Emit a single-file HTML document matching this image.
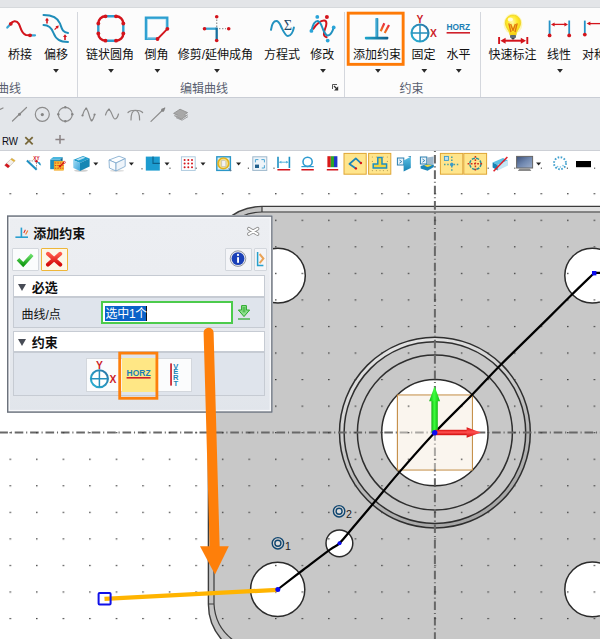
<!DOCTYPE html>
<html lang="zh-CN"><head><meta charset="utf-8"><title>添加约束</title>
<style>
html,body{margin:0;padding:0}
body{width:600px;height:639px;overflow:hidden;position:relative;background:#fff;font-family:"Liberation Sans","Noto Sans CJK SC",sans-serif;font-size:12px;color:#1a1a1a}
.abs{position:absolute}
#topstrip{left:0;top:0;width:600px;height:8px;background:#e3e5e8;border-bottom:1px solid #d6d9dc;box-sizing:border-box}
#ribbon{left:0;top:0;width:600px;height:97px;background:#fcfcfc}
#band{left:0;top:97px;width:600px;height:53px;background:#e3e6ea;border-top:1px solid #c9cdd5;box-sizing:border-box}
.lbl{position:absolute;top:46.8px;font-size:12px;line-height:16px;white-space:nowrap;transform:translateX(-50%);color:#111}
.grp{position:absolute;top:80.7px;font-size:12px;line-height:16px;white-space:nowrap;transform:translateX(-50%);color:#595f70}
.vsep{position:absolute;top:12px;width:1px;height:85px;background:#d4d7dd}
.sech{position:absolute;left:5px;width:252px;height:21.5px;box-sizing:border-box;border:1px solid #c6cbd3;background:#fff}
.secr{position:absolute;left:5px;width:252px;box-sizing:border-box;border:1px solid #c6cbd3;background:#dfe4ec}
.tri{position:absolute;left:3.6px;top:7.6px;width:0;height:0;border-left:4.7px solid transparent;border-right:4.7px solid transparent;border-top:7.8px solid #484c56}
.st{position:absolute;left:17.8px;top:2.8px;font-size:13px;line-height:18px;font-weight:bold;color:#111;white-space:nowrap}
</style></head><body>
<!-- CANVAS -->
<svg class="abs" id="canvas" style="left:0;top:0" width="600" height="639" viewBox="0 0 600 639">
<defs>
<pattern id="grid" x="434.3" y="432.1" width="26.55" height="26.55" patternUnits="userSpaceOnUse"><rect x="0" y="0" width="1.5" height="1.2" fill="#383838"/></pattern>
<linearGradient id="cham" x1="0.3" y1="0" x2="0.7" y2="1"><stop offset="0" stop-color="#e4e4e4"/><stop offset="0.3" stop-color="#d4d4d4"/><stop offset="0.55" stop-color="#bcbcbc"/><stop offset="1" stop-color="#a4a4a4"/></linearGradient>
</defs>
<!-- plate -->
<path d="M262 206.4 H601 V640 H222 A53.6 53.6 0 0 1 208.4 604 V260 A53.6 53.6 0 0 1 262 206.4Z" fill="#c3c3c3" stroke="#3c3c3c" stroke-width="1.4"/>
<path d="M262 207.1 H600 V211.6 H262Z" fill="#e0e0e0"/>
<path d="M262 212 H601 V640 H233 A48 48 0 0 1 214 604 V260 A48 48 0 0 1 262 212Z" fill="#c8c8c8" stroke="#3a3a3a" stroke-width="1.2"/>
<path d="M262 206.4V212 M208.4 604H214" stroke="#3c3c3c" stroke-width="1.2" fill="none"/>
<!-- holes -->
<g fill="#fff" stroke="#2b2b2b" stroke-width="1.5">
<circle cx="277.9" cy="275.6" r="27.4"/>
<circle cx="592.2" cy="275.6" r="27.4"/>
<circle cx="277.7" cy="589.4" r="27.1"/>
<circle cx="592.2" cy="589.4" r="27.4"/>
<circle cx="339.4" cy="543.3" r="13.4"/>
</g>
<!-- centre boss -->
<circle cx="434.9" cy="432.6" r="95.4" fill="url(#cham)" stroke="#2e2e2e" stroke-width="1.5"/>
<circle cx="434.9" cy="432.6" r="90.8" fill="#c8c8c8" stroke="#2e2e2e" stroke-width="1.5"/>
<circle cx="434.9" cy="432.6" r="77.5" fill="none" stroke="#2e2e2e" stroke-width="1.5"/>
<circle cx="434.9" cy="432.6" r="53.2" fill="#fff" stroke="#2b2b2b" stroke-width="1.5"/>
<rect x="397.4" y="395" width="75" height="75" fill="#faf6f1" stroke="#c48c44" stroke-width="1.1"/>
<!-- centre lines -->
<path d="M0 432.5H600" stroke="#686868" stroke-width="2" stroke-dasharray="8.6 2.85 1.1 2.85" stroke-dashoffset="0.7" fill="none"/>
<path d="M434.9 151V639" stroke="#686868" stroke-width="2" stroke-dasharray="8.6 2.85 1.1 2.85" stroke-dashoffset="11.5" fill="none"/>
<rect x="398" y="395.6" width="73.8" height="73.8" fill="#faf4ea" opacity="0.45"/>
<!-- grid -->
<rect x="0" y="180" width="600" height="459" fill="url(#grid)"/>
<!-- spline -->
<path d="M600 272.8 L594.4 272.8 C590.6 276.5 579.4 287.2 571.7 294.8 C564.0 302.4 559.8 306.7 548.0 318.4 C536.2 330.1 513.5 352.0 500.8 364.8 C488.1 377.6 482.9 383.7 471.9 395.0 C460.9 406.3 446.9 419.7 434.8 432.5 C422.8 445.3 409.6 460.4 399.6 471.9 C389.6 483.4 382.8 492.0 374.9 501.5 C366.9 511.0 357.8 521.8 351.9 528.8 C346.0 535.8 343.0 539.9 339.4 543.4 C335.8 546.9 336.1 545.2 330.0 549.6 C323.9 554.0 311.7 563.4 303.0 570.0 C294.3 576.6 281.8 586.2 277.6 589.5" fill="none" stroke="#000" stroke-width="2.2"/>
<!-- yellow line -->
<path d="M104.5 598.8 L277.8 589.8" stroke="#ffb400" stroke-width="4.2" fill="none"/>
<rect x="98.6" y="593" width="12" height="11.5" rx="1" fill="none" stroke="#1010e8" stroke-width="2"/>
<!-- triad -->
<defs>
<linearGradient id="gg" x1="0" y1="0" x2="1" y2="0"><stop offset="0" stop-color="#12b012"/><stop offset="0.45" stop-color="#3cff3c"/><stop offset="1" stop-color="#14bc14"/></linearGradient>
<linearGradient id="rg" x1="0" y1="0" x2="0" y2="1"><stop offset="0" stop-color="#d80c0c"/><stop offset="0.45" stop-color="#ff5050"/><stop offset="1" stop-color="#cc0808"/></linearGradient>
</defs>
<rect x="431.4" y="400" width="6.4" height="32.6" fill="url(#gg)"/>
<path d="M429.1 401.2 L434.6 386.2 L440.1 401.2Z" fill="url(#gg)"/>
<rect x="435" y="429.8" width="32" height="5.4" fill="url(#rg)"/>
<path d="M466.6 427.3 L480.8 432.6 L466.6 437.8Z" fill="url(#rg)"/>
<circle cx="434.7" cy="432.7" r="2.7" fill="#0a0af0"/>
<circle cx="277.8" cy="589.5" r="2.5" fill="#0a0af0"/>
<circle cx="339.5" cy="543.3" r="2" fill="#0a0af0"/>
<rect x="592" y="271" width="4.4" height="4.4" fill="#0a0af0"/>
<!-- concentric marks -->
<g fill="#d6d2d0" stroke="#0f4670" stroke-width="1.4">
<circle cx="277.9" cy="543.3" r="5.7"/><circle cx="277.9" cy="543.3" r="3" fill="#dcdcdc"/>
<circle cx="339.1" cy="511.3" r="5.7"/><circle cx="339.1" cy="511.3" r="3" fill="#dcdcdc"/>
</g>
<text x="285" y="549.8" font-size="10.6" fill="#222" font-family="Liberation Sans, sans-serif">1</text>
<text x="345.9" y="517.8" font-size="10.6" fill="#222" font-family="Liberation Sans, sans-serif">2</text>
</svg>


<div class="abs" id="ribbon">
<div class="vsep" style="left:77px"></div>
<div class="vsep" style="left:343.8px"></div>
<div class="vsep" style="left:479.9px"></div>
<div class="lbl" style="left:20px">桥接</div>
<div class="lbl" style="left:56px">偏移</div>
<div class="lbl" style="left:110px">链状圆角</div>
<div class="lbl" style="left:156.5px">倒角</div>
<div class="lbl" style="left:215.3px">修剪/延伸成角</div>
<div class="lbl" style="left:282px">方程式</div>
<div class="lbl" style="left:322.3px">修改</div>
<div class="lbl" style="left:377px">添加约束</div>
<div class="lbl" style="left:423.5px">固定</div>
<div class="lbl" style="left:458.5px">水平</div>
<div class="lbl" style="left:512.5px">快速标注</div>
<div class="lbl" style="left:559px">线性</div>
<div class="lbl" style="left:594px">对称</div>
<div class="grp" style="left:9px">曲线</div>
<div class="grp" style="left:204px">编辑曲线</div>
<div class="grp" style="left:411.6px">约束</div>
<svg class="abs" id="ribicons" style="left:0;top:0" width="600" height="97" viewBox="0 0 600 97">
<defs>
<linearGradient id="bl" x1="0" y1="0" x2="0" y2="1"><stop offset="0" stop-color="#4db4dc"/><stop offset="1" stop-color="#1a7fae"/></linearGradient>
<linearGradient id="blh" x1="0" y1="0" x2="1" y2="0"><stop offset="0" stop-color="#1a86b6"/><stop offset="1" stop-color="#56bce0"/></linearGradient>
<radialGradient id="bulb" cx="0.45" cy="0.35" r="0.65"><stop offset="0" stop-color="#fff9a8"/><stop offset="0.5" stop-color="#ffe92a"/><stop offset="1" stop-color="#f4cc10"/></radialGradient>
</defs>
<!-- bridge -->
<g fill="none" stroke-linecap="round">
<path d="M7.3 27.6 L10.3 24.2" stroke="#3aa6d4" stroke-width="2.2"/>
<path d="M31 35.3 H35" stroke="#3aa6d4" stroke-width="2.2"/>
<path d="M10.3 24.2 C12.5 20.8 16.5 20 18.8 23.8 C21 27.5 21 33.5 26 35 L30.5 35.3" stroke="#d3141c" stroke-width="2.1"/>
</g>
<circle cx="10.8" cy="23.8" r="1.9" fill="#d3141c"/><circle cx="30" cy="35.3" r="1.9" fill="#d3141c"/>
<!-- offset -->
<g fill="none" stroke="#1f8db9" stroke-width="2" stroke-linecap="round">
<path d="M43.5 15 C52 15 57.5 17 60 23.5 C62 29 62.5 32.5 68 33"/>
<path d="M43.5 25 C49 25 51.5 27.5 53.5 33 C56 39.5 60 41.8 68 42"/>
</g>
<g fill="#d3141c">
<path d="M46.2 23.6V20.6H45L47 17.8L49 20.6H47.8V23.6Z"/>
<path d="M64.2 40V37H63L65 34.2L67 37H65.8V40Z"/>
<path d="M54.2 29.2L56.3 27.1L55.4 26.2L58.8 25.4L58 28.8L57.1 27.9L55 30Z"/>
</g>
<!-- chain fillet -->
<g fill="none" stroke-width="2.4">
<path d="M105.5 16.3H116 M105.5 40.7H116 M98.3 23.5V33.5 M123.3 23.5V33.5" stroke="#2d9fd0"/>
<path d="M98.3 23.5 A7.2 7.2 0 0 1 105.5 16.3 M116 16.3 A7.3 7.2 0 0 1 123.3 23.5 M123.3 33.5 A7.3 7.2 0 0 1 116 40.7 M105.5 40.7 A7.2 7.2 0 0 1 98.3 33.5" stroke="#d3141c"/>
</g>
<g fill="#d3141c"><circle cx="105.5" cy="16.3" r="1.9"/><circle cx="116" cy="16.3" r="1.9"/><circle cx="123.3" cy="23.5" r="1.9"/><circle cx="123.3" cy="33.5" r="1.9"/><circle cx="116" cy="40.7" r="1.9"/><circle cx="105.5" cy="40.7" r="1.9"/><circle cx="98.3" cy="33.5" r="1.9"/><circle cx="98.3" cy="23.5" r="1.9"/></g>
<!-- chamfer -->
<path d="M157.5 38.8H146V17.8H167.2V28.8" fill="none" stroke="#2d9fd0" stroke-width="2.5"/>
<path d="M157.5 38.8H147.4V19.1H166V28.8" fill="none" stroke="#8fd2ec" stroke-width="0.8" opacity="0.8"/>
<path d="M167.4 28.8L157.5 39" stroke="#d3141c" stroke-width="1.8"/>
<circle cx="167.4" cy="28.8" r="1.9" fill="#d3141c"/><circle cx="157.5" cy="39" r="1.9" fill="#d3141c"/>
<!-- trim -->
<path d="M216.7 19.5V27 M219 28.7H226" stroke="#999" stroke-width="1.3" stroke-dasharray="1.4 1.6" fill="none"/>
<path d="M204.5 28.7H216.7" stroke="#3aa6d4" stroke-width="2.3" fill="none"/>
<path d="M216.7 27.6V40.5" stroke="#176f9e" stroke-width="2.3" fill="none"/>
<g fill="#d3141c"><circle cx="216.7" cy="16.8" r="1.8"/><circle cx="204.5" cy="28.7" r="1.8"/><circle cx="228.7" cy="28.7" r="1.8"/><circle cx="216.7" cy="40.5" r="1.8"/></g>
<!-- equation -->
<path d="M271 29.8C271.8 24.4 274 21.1 276.3 21.1C279.4 21.1 280.4 25.4 281.9 28.3C283.6 31.8 285.6 36.1 287.9 36.1C290.6 36.1 293 32 293.9 27.5" fill="none" stroke="#2292c0" stroke-width="2" stroke-linecap="round"/>
<text x="283.8" y="29.9" font-family="Liberation Serif, serif" font-size="13.6" fill="#1c4868" textLength="8.3" lengthAdjust="spacingAndGlyphs">Σ</text>
<!-- modify -->
<path d="M313.4 28.6C316 24.4 320.6 20.4 324.2 20.6C327.4 20.8 326.6 25 325 29C323.6 32.8 323 36.2 326.6 37.2" fill="none" stroke="#d3141c" stroke-width="2" stroke-linecap="round"/>
<path d="M311.4 30.9C312.6 25.6 315 21 317.6 21C320.6 21 321.6 26.4 323.3 30C324.6 33 326 35.6 327.8 35.4C330.4 35 332.6 31.4 333.7 27.4" fill="none" stroke="#2292c0" stroke-width="2" stroke-linecap="round"/>
<g fill="#2aa4d8"><circle cx="311.4" cy="30.9" r="1.9"/><circle cx="317.3" cy="16.9" r="1.9"/><circle cx="333.7" cy="27.4" r="1.9"/><circle cx="327.7" cy="40.6" r="1.9"/></g>
<circle cx="326.9" cy="16.9" r="2" fill="#d3141c"/>
<!-- add constraint -->
<defs><linearGradient id="sl" x1="0" y1="0" x2="0" y2="1"><stop offset="0" stop-color="#e8263c"/><stop offset="1" stop-color="#f27a1c"/></linearGradient>
<linearGradient id="stem" x1="0" y1="0" x2="1" y2="0"><stop offset="0" stop-color="#62bee4"/><stop offset="1" stop-color="#1688b4"/></linearGradient>
<linearGradient id="base" x1="0" y1="0" x2="1" y2="0"><stop offset="0" stop-color="#1ea6cc"/><stop offset="1" stop-color="#0f5c88"/></linearGradient></defs>
<rect x="375.2" y="18" width="3.1" height="19.4" rx="0.8" fill="url(#stem)"/>
<rect x="364.9" y="36.7" width="23.4" height="2.7" rx="0.8" fill="url(#base)"/>
<path d="M384.3 23.3L380.7 31.3" stroke="url(#sl)" stroke-width="2.2"/>
<path d="M389 25L384.7 33" stroke="url(#sl)" stroke-width="2.2"/>
<!-- fix -->
<defs><linearGradient id="fixg" x1="0" y1="1" x2="1" y2="0"><stop offset="0" stop-color="#28b2d4"/><stop offset="1" stop-color="#2a74a6"/></linearGradient></defs>
<circle cx="420" cy="33" r="8.5" fill="#fff" stroke="url(#fixg)" stroke-width="2.1"/>
<path d="M420 24.6V41.4 M411.6 33H428.4" stroke="#2590bc" stroke-width="1.5" fill="none"/>
<text x="416.5" y="22.7" font-family="Liberation Sans, sans-serif" font-weight="bold" font-size="10.3" fill="#cc1c2a">Y</text>
<text x="430" y="36.9" font-family="Liberation Sans, sans-serif" font-weight="bold" font-size="10.3" fill="#cc1c2a">X</text>
<!-- horz -->
<text x="446.4" y="30.4" font-family="Liberation Sans, sans-serif" font-weight="bold" font-size="8.4" fill="#1b7fb5" textLength="23.6" lengthAdjust="spacingAndGlyphs">HORZ</text>
<rect x="446.6" y="32" width="23.4" height="1.6" fill="#d0202a"/>
<!-- quick dim -->
<ellipse cx="513" cy="24" rx="9.4" ry="10.4" fill="#fff27a" opacity="0.55"/>
<path d="M513 15.2C508.4 15.2 505.4 18.6 505.4 22.8C505.4 27 508.2 29.4 509.6 32.6L510 35.4H516L516.4 32.6C517.8 29.4 520.6 27 520.6 22.8C520.6 18.6 517.6 15.2 513 15.2Z" fill="url(#bulb)" stroke="#ecd21c" stroke-width="0.8"/>
<ellipse cx="510.4" cy="19.6" rx="2.6" ry="2" fill="#fffef0" opacity="0.85"/>
<path d="M508.8 23.4L511 32 M517.2 23.4L515 32 M510.6 24L513 30.4L515.4 24" stroke="#e07410" stroke-width="1.4" fill="none" stroke-linejoin="round"/>
<rect x="510" y="35" width="6" height="3" rx="1" fill="#5e6a72"/>
<path d="M511.2 38H514.8L514 39.4H512Z" fill="#3a4248"/>
<path d="M499.1 37V44 M527.3 37V44" stroke="#d3141c" stroke-width="1.9" fill="none"/>
<path d="M503 40.7H523.4" stroke="#d3141c" stroke-width="2" fill="none"/>
<path d="M500.4 40.7L505.6 37.7V43.7Z M526 40.7L520.8 37.7V43.7Z" fill="#d3141c"/>
<!-- linear -->
<path d="M549.6 20.6V34.6 M569.2 20.6V34.6" stroke="#2592c6" stroke-width="1.8" fill="none"/>
<circle cx="549.6" cy="35.4" r="1.9" fill="#d3141c"/><circle cx="569.2" cy="35.4" r="1.9" fill="#d3141c"/>
<path d="M553 24.4H566" stroke="#d3141c" stroke-width="1.3" fill="none"/>
<path d="M551 24.4L554.6 22.4V26.4Z M568 24.4L564.4 22.4V26.4Z" fill="#d3141c"/>
<!-- symmetric -->
<path d="M584.8 20.6V33.6" stroke="#2592c6" stroke-width="1.8" fill="none"/>
<circle cx="584.8" cy="34.6" r="1.9" fill="#d3141c"/>
<path d="M589 23.6H600" stroke="#d3141c" stroke-width="1.3" fill="none"/>
<path d="M586.6 23.6L590.4 21.6V25.6Z" fill="#d3141c"/>
<rect x="348.2" y="13.15" width="54.95" height="51.2" fill="none" stroke="#fe7a06" stroke-width="2.9"/>
<path d="M53.1 69.1H58.9L56.0 72.7Z M108.1 69.1H113.9L111.0 72.7Z M154.5 69.1H160.3L157.4 72.7Z M214.1 69.1H219.9L217.0 72.7Z M320.1 69.1H325.9L323.0 72.7Z M375.1 69.1H380.9L378.0 72.7Z M421.4 69.1H427.2L424.3 72.7Z M455.9 69.1H461.7L458.8 72.7Z M557.1 69.1H562.9L560.0 72.7Z" fill="#2a2a2a"/>
<!-- launcher -->
<path d="M332.5 89V84.5H337" stroke="#555" stroke-width="1" fill="none"/>
<path d="M334 86L337 89" stroke="#333" stroke-width="1.2" fill="none"/>
<path d="M338.2 86.2V90.4H334Z" fill="#333"/>
</svg>
</div>
<div class="abs" id="topstrip"></div>
<div class="abs" id="band"></div>
<svg class="abs" id="bandicons" style="left:0;top:97px" width="600" height="53" viewBox="0 97 600 53">
<g fill="none" stroke="#8c8c8c" stroke-width="1.2" stroke-linecap="round">
<path d="M0 109.5L3 108"/>
<path d="M12.5 121L26.5 107.5"/>
<circle cx="42.3" cy="114.3" r="7"/>
<circle cx="65.3" cy="114.3" r="7"/>
<path d="M82.5 115.5 C83.5 112 84.8 108.8 86.2 108.8 C88.5 108.8 89.5 120.3 91.6 120.3 C93 120.3 94 117 94.6 114.5"/>
<path d="M105.5 115 C106.5 111.5 107.5 109.8 109 109.8 C111.5 109.8 112.5 119 115 119 C116.8 119 117.8 116.5 118.5 114"/>
<path d="M131 120 C131 113 133 110.5 135.3 110.5 C137.6 110.5 139.6 113 139.6 120"/>
<path d="M128 112.5 C131 109.5 139.6 109.5 142.6 112.5"/>
<path d="M151 121.4L164.6 108.2"/>
</g>
<g fill="#858585">
<circle cx="19.5" cy="114.3" r="1.5"/>
<circle cx="42.3" cy="114.6" r="1.6"/>
<circle cx="65.3" cy="107.3" r="1.2"/><circle cx="65.3" cy="121.3" r="1.2"/><circle cx="58.3" cy="114.3" r="1.2"/><circle cx="72.3" cy="114.3" r="1.2"/>
<circle cx="82.5" cy="115.5" r="1.1"/><circle cx="86.2" cy="108.6" r="1.1"/><circle cx="91.6" cy="120.5" r="1.1"/><circle cx="94.6" cy="114.5" r="1.1"/>
<circle cx="109" cy="109.6" r="1.1"/>
<path d="M165.4 107.4L161 109L163.8 111.8Z"/>
<circle cx="162.6" cy="110.2" r="1.5"/>
</g>
<g fill="#a8a8a8" stroke="#8a8a8a" stroke-width="0.8">
<path d="M173.6 113.4L180 109.2L187.6 112.6L181.4 117Z"/>
<path d="M174.2 115.6L181.4 119.2L187.8 114.8"/>
<path d="M176 117.6L182 120.2L188 116.6" fill="none"/>
</g>
<text x="2" y="144.8" font-family="Liberation Sans, sans-serif" font-size="11.2" fill="#0a0a14" textLength="16" lengthAdjust="spacingAndGlyphs">RW</text>
<!-- tab close / plus -->
<path d="M25.3 137.2L32.7 144.4 M32.7 137.2L25.3 144.4" stroke="#78683a" stroke-width="1.8" fill="none"/>
<path d="M60 135V143.8 M55.4 139.4H64.6" stroke="#8a8284" stroke-width="1.5" fill="none"/>
</svg>
<svg class="abs" id="tbicons" style="left:0;top:150px" width="600" height="30" viewBox="0 150 600 30">
<defs>
<linearGradient id="tbb" x1="0" y1="0" x2="0" y2="1"><stop offset="0" stop-color="#5cc0e4"/><stop offset="1" stop-color="#1583b4"/></linearGradient>
<linearGradient id="bxl" x1="0" y1="0" x2="1" y2="1"><stop offset="0" stop-color="#a4dcf4"/><stop offset="1" stop-color="#3aa6dc"/></linearGradient>
<linearGradient id="mon" x1="0" y1="0" x2="1" y2="1"><stop offset="0" stop-color="#3c4f78"/><stop offset="0.5" stop-color="#7088b0"/><stop offset="1" stop-color="#9fb0cc"/></linearGradient>
</defs>
<rect x="0" y="150" width="600" height="1" fill="#cdd0d6"/>
<!-- 1 eraser -->
<path d="M4.6 165.2L11.8 158.2L15.2 160.6L8 168Z" fill="#f4f0ea" stroke="#b9b0a6" stroke-width="0.6"/>
<path d="M4.6 165.2L6.6 163.2L10 166L8 168Z" fill="#d3141c"/>
<path d="M10.6 159.4L11.8 158.2L15.2 160.6L14 161.9Z" fill="#e2b33a"/>
<!-- 2 xy triangle -->
<path d="M26.9 160.5L36.7 169.8" stroke="#1d8fc2" stroke-width="2.1" fill="none"/>
<path d="M29 160.9H35.6 M36.5 162.4V168.4" stroke="#9a9a9a" stroke-width="1" stroke-dasharray="1.6 0.9" fill="none"/>
<text x="33.2" y="159.6" font-family="Liberation Sans, sans-serif" font-weight="bold" font-size="4.8" fill="#d3141c" textLength="6.4" lengthAdjust="spacingAndGlyphs">XY</text>
<circle cx="36.5" cy="161.2" r="1.3" fill="#d3141c"/>
<path d="M37.6 162.2L40.4 165.2L39.8 162.8Z" fill="#1d8fc2" stroke="#1d8fc2" stroke-width="0.8"/>
<!-- 3 cube w/ grid -->
<path d="M50.2 159.6L53.2 157H62.6L60.4 159.6Z" fill="#4ab6de"/>
<path d="M50.2 159.6H60.4V169.2H50.2Z" fill="#1c90c0"/>
<path d="M60.4 159.6L62.6 157V161.4H60.4Z" fill="#126c98"/>
<rect x="54.2" y="161.2" width="9.4" height="9" fill="#f9c436"/>
<rect x="54.2" y="161.2" width="9.4" height="9" fill="none" stroke="#f2a322" stroke-width="0.6"/>
<path d="M54.8 163H63.4 M54.8 165.6H63.4 M54.8 168.2H63.4" stroke="#e03a1a" stroke-width="1" stroke-dasharray="1.5 1" fill="none"/>
<path d="M64 162.6L59.6 166.6" stroke="#d3141c" stroke-width="1.4"/><path d="M58.6 167.6L59.4 164.8L61.6 167Z" fill="#d3141c"/>
<circle cx="64.4" cy="162.4" r="1" fill="none" stroke="#d3141c" stroke-width="0.7"/>
<!-- 4 blue box -->
<ellipse cx="81" cy="170.6" rx="7" ry="1.2" fill="#b0b0b0" opacity="0.6"/>
<path d="M73 160L83 156L89.6 158.6L80 163Z" fill="#1f9ccc"/>
<path d="M76 159.4L83 156.8L85.4 157.8L78.6 160.6Z" fill="#d8f0fa" opacity="0.8"/>
<path d="M73 160L80 163V171L73.4 168Z" fill="url(#bxl)"/>
<path d="M80 163L89.6 158.6V166.4L80 171Z" fill="#1787b4"/>
<path d="M93.3 162.6H98.3L95.8 165.6Z" fill="#222"/>
<!-- 5 white cube -->
<ellipse cx="117" cy="170.8" rx="7" ry="1" fill="#c0c0c0" opacity="0.5"/>
<path d="M109 160L119 156.2L125.2 158.6L116 163Z" fill="#fdfeff" stroke="#7aa6cc" stroke-width="0.8" stroke-linejoin="round"/>
<path d="M109 160L116 163V171L109.4 168Z" fill="#f8fbfe" stroke="#7aa6cc" stroke-width="0.8" stroke-linejoin="round"/>
<path d="M116 163L125.2 158.6V166.4L116 171Z" fill="#eef4fa" stroke="#7aa6cc" stroke-width="0.8" stroke-linejoin="round"/>
<path d="M128.9 162.6H133.9L131.4 165.6Z" fill="#222"/>
<!-- 6 blue square -->
<rect x="141.4" y="168.2" width="1.2" height="1.2" fill="#555"/>
<rect x="145.8" y="156.6" width="14" height="14" fill="#1d9cd0"/>
<path d="M153 156.6V163.4H159.8" stroke="#0d5f88" stroke-width="1.1" fill="none"/>
<path d="M164.5 162.6H169.5L167.0 165.6Z" fill="#222"/><rect x="169.4" y="167.6" width="1.2" height="1.2" fill="#555"/>
<!-- 7 dots grid -->
<rect x="181.4" y="156.8" width="13.8" height="13.6" fill="#fdfdfd" stroke="#a7c6dc" stroke-width="0.9"/>
<g fill="#d3141c"><circle cx="184.6" cy="160" r="1"/><circle cx="188.3" cy="160" r="1"/><circle cx="192" cy="160" r="1"/><circle cx="184.6" cy="163.6" r="1"/><circle cx="188.3" cy="163.6" r="1"/><circle cx="192" cy="163.6" r="1"/><circle cx="184.6" cy="167.2" r="1"/><circle cx="188.3" cy="167.2" r="1"/><circle cx="192" cy="167.2" r="1"/></g>
<path d="M200.5 162.6H205.5L203.0 165.6Z" fill="#222"/><rect x="195.6" y="167.6" width="1.2" height="1.2" fill="#555"/>
<!-- 8 frame w/ yellow circle -->
<rect x="216.8" y="156.8" width="13.6" height="13.6" fill="#d8eef8" stroke="#2b97c8" stroke-width="1.4"/>
<circle cx="223.4" cy="163.4" r="5.4" fill="#f6e08a" stroke="#e2b21c" stroke-width="1.6"/>
<path d="M221.6 160.4H224.6L225.8 161.6V166.6H221.6Z" fill="#f2f2f2" stroke="#aaa" stroke-width="0.5"/>
<path d="M228.6 168.4L231.2 171" stroke="#5a7c96" stroke-width="1.3"/>
<path d="M236.1 162.6H241.1L238.6 165.6Z" fill="#222"/>
<!-- 9 dashed frame -->
<rect x="247.8" y="167.6" width="1.2" height="1.2" fill="#555"/>
<rect x="252.8" y="156.8" width="14" height="13.6" fill="#eef4f9" stroke="#9db7cb" stroke-width="1"/>
<path d="M255.4 162.4V159.6H258.4 M261.4 159.6H264.4V162.4 M264.4 165.2V168H261.8" stroke="#4aa6d4" stroke-width="1" fill="none"/>
<rect x="255" y="164.6" width="4" height="3.4" fill="#23608c"/>
<!-- 10 H dim -->
<rect x="273.4" y="167.6" width="1.2" height="1.2" fill="#555"/>
<path d="M278 156.8V168 M289.4 156.8V168" stroke="#1d8fc2" stroke-width="1.6" fill="none"/>
<path d="M279.6 162.2H287.8" stroke="#5cb6dc" stroke-width="1" fill="none"/>
<path d="M278.8 162.2L281.4 160.8V163.6Z M288.6 162.2L286 160.8V163.6Z" fill="#5cb6dc"/>
<rect x="277.4" y="169" width="12.8" height="1.5" fill="#d3141c"/>
<!-- 11 circle underline -->
<circle cx="307.6" cy="161.8" r="4.6" fill="none" stroke="#2f9bd0" stroke-width="1.6"/>
<rect x="301.4" y="166" width="12.4" height="1.2" fill="#2f9bd0"/>
<rect x="301.4" y="169" width="12.4" height="1.5" fill="#d3141c"/>
<!-- 12 RGB -->
<rect x="327.4" y="156.2" width="3.4" height="11" fill="#d91a1a"/><rect x="330.8" y="156.2" width="3.2" height="11" fill="#2aa52a"/><rect x="334" y="156.2" width="3.4" height="11" fill="#2038c8"/>
<rect x="326.8" y="169" width="11.4" height="1.5" fill="#d3141c"/>
<!-- 13 yellow btn < -->
<rect x="344" y="153.4" width="22.2" height="20.8" fill="#ffe58c" stroke="#dfa534" stroke-width="1"/>
<path d="M360.6 162.8L355.8 158.4L349.4 164L355.6 168.2" fill="none" stroke="#1d84b8" stroke-width="1.7" stroke-linejoin="round"/>
<circle cx="360.9" cy="163" r="1.2" fill="#d3141c"/><circle cx="355.9" cy="168.4" r="1.2" fill="#d3141c"/>
<!-- 14 yellow btn stamp -->
<rect x="368.6" y="153.4" width="22.2" height="20.8" fill="#ffe58c" stroke="#dfa534" stroke-width="1"/>
<g fill="#b8a25a"><circle cx="372.4" cy="157" r="0.6"/><circle cx="376.4" cy="157" r="0.6"/><circle cx="383.4" cy="157" r="0.6"/><circle cx="387.4" cy="157" r="0.6"/><circle cx="372.4" cy="161.4" r="0.6"/><circle cx="387.4" cy="161.4" r="0.6"/><circle cx="372.4" cy="170.6" r="0.6"/><circle cx="376.4" cy="170.6" r="0.6"/><circle cx="380" cy="170.6" r="0.6"/><circle cx="383.4" cy="170.6" r="0.6"/><circle cx="387.4" cy="170.6" r="0.6"/></g>
<path d="M377.8 157.4H382V164H386.6V168H373.2V164H377.8Z" fill="#f3d23a" stroke="#1d8fc2" stroke-width="1.5"/>
<!-- 15 blue flag -->
<rect x="397.4" y="158" width="6.4" height="7" fill="#e8f2fa" stroke="#2b7fb0" stroke-width="1"/>
<path d="M399.4 160L401.8 161.6L399.4 163.2" fill="none" stroke="#2b7fb0" stroke-width="0.9"/>
<path d="M403.6 160.6L410.8 156.8V168L403.6 171.4Z" fill="url(#tbb)"/>
<path d="M407.6 156.8L410.8 156V157.2Z" fill="#1b78a8"/>
<!-- 16 blue w/ yellow -->
<rect x="420.4" y="157" width="6.4" height="7" fill="#e8f2fa" stroke="#2b7fb0" stroke-width="1"/>
<path d="M422.4 159L424.8 160.6L422.4 162.2" fill="none" stroke="#2b7fb0" stroke-width="0.9"/>
<path d="M427 157.4L433.6 156.4V165L427 164Z" fill="#9fb8cc"/>
<path d="M420.6 166L427 164L433.8 165L433.8 167L427.6 170.8L420.6 168.4Z" fill="#1a86b8"/>
<path d="M424 165.6L428 164.6L432 165.4L427.6 167Z" fill="#f2d83a"/>
<!-- 17 yellow btn dotted cross -->
<rect x="440.4" y="153.4" width="22.4" height="20.8" fill="#ffe58c" stroke="#dfa534" stroke-width="1"/>
<rect x="444.4" y="156.4" width="4" height="4" fill="#bfe0f0" stroke="#3a9acb" stroke-width="0.9"/>
<path d="M451.8 156.4V172 M444 164.6H460" stroke="#4aa0a0" stroke-width="1.5" stroke-dasharray="1.5 1.7" fill="none"/>
<circle cx="451.8" cy="164.6" r="1.8" fill="#3a9acb"/>
<!-- 18 yellow btn target -->
<rect x="463.8" y="153.4" width="22.8" height="20.8" fill="#ffe58c" stroke="#dfa534" stroke-width="1"/>
<circle cx="475.4" cy="163.8" r="5.6" fill="none" stroke="#2a8f98" stroke-width="1.5" stroke-dasharray="3.2 1.2"/>
<path d="M475.4 156V171.6 M467.6 163.8H483.2" stroke="#d3301c" stroke-width="1.5" stroke-dasharray="1.7 1.5" fill="none"/>
<rect x="487.6" y="167.6" width="1.2" height="1.2" fill="#555"/>
<!-- 19 blue box slash -->
<path d="M492.6 162.4L503 158L508 160.4L497.8 165Z" fill="#5cc0e4"/>
<path d="M492.6 162.4L497.8 165V170.4L492.6 167.6Z" fill="#1583b4"/>
<path d="M497.8 165L508 160.4V165.4L497.8 170.4Z" fill="#c4e6f4"/>
<path d="M493.6 171.2L507.4 157" stroke="#e0202a" stroke-width="1.5"/>
<!-- 20 monitor -->
<rect x="514.2" y="167.6" width="1.2" height="1.2" fill="#555"/>
<rect x="516.6" y="156.4" width="16" height="11.6" fill="url(#mon)" stroke="#666" stroke-width="1"/>
<path d="M519.6 168.4H529.6L531.4 171H517.8Z" fill="#8a8a8a"/>
<path d="M536.1 162.6H541.1L538.6 165.6Z" fill="#222"/><rect x="540.8" y="167.6" width="1.2" height="1.2" fill="#555"/>
<!-- 21 dotted circle -->
<circle cx="560" cy="163.2" r="6" fill="none" stroke="#3f9fcd" stroke-width="1.9" stroke-dasharray="1.6 1.54"/>
<g fill="#7cc0e0"><circle cx="557.6" cy="166.6" r="0.8"/><circle cx="560.4" cy="167" r="0.8"/><circle cx="563" cy="165.6" r="0.8"/></g>
<rect x="566.8" y="167.6" width="1.2" height="1.2" fill="#555"/>
<!-- 22 black rect -->
<rect x="576" y="161" width="15" height="6.2" fill="#000"/>
<rect x="594" y="167.6" width="1.2" height="1.2" fill="#555"/>
</svg>

<div class="abs" id="dlg" style="left:7px;top:215px;width:266px;height:198px;box-sizing:border-box;border:1px solid transparent;background:linear-gradient(#eceef2,#ebedf1 30%,#e1e5eb);background-clip:border-box">
<svg class="abs" style="left:-1px;top:-1px" width="266" height="198" viewBox="7 215 266 198"><rect x="9.2" y="217.6" width="261.2" height="193" fill="none" stroke="#f7f8fa" stroke-width="1.4"/><rect x="7.7" y="216.1" width="264.2" height="196" fill="none" stroke="#6c727c" stroke-width="1.4"/></svg>
<svg class="abs" style="left:7px;top:10px" width="16" height="14" viewBox="15 225 16 14">
<rect x="20.6" y="226.6" width="1.6" height="9.4" fill="#2a9fd0"/><rect x="15.4" y="235.4" width="12.6" height="1.6" fill="#2a9fd0"/>
<path d="M23.8 232L25.4 228.8" stroke="#e02a20" stroke-width="1.1"/><path d="M25.6 233.6L27.8 229.4" stroke="#f07828" stroke-width="1.1"/>
</svg>
<div class="abs" style="left:25.3px;top:8.7px;font-size:13px;line-height:18px;font-weight:bold;color:#111;white-space:nowrap">添加约束</div>
<svg class="abs" style="left:237px;top:9px" width="16" height="13" viewBox="245 225 16 13">
<path d="M248.9 228.7L257.5 234.1 M257.5 228.7L248.9 234.1" stroke="#909090" stroke-width="3.6" stroke-linecap="round" fill="none"/>
<path d="M248.9 228.7L257.5 234.1 M257.5 228.7L248.9 234.1" stroke="#fff" stroke-width="1.9" stroke-linecap="round" fill="none"/>
</svg>
<!-- buttons -->
<div class="abs" style="left:4px;top:31.5px;width:26.5px;height:23px;box-sizing:border-box;border:1px solid #d3d7dd;background:#fbfcfd;border-radius:1px"></div>
<div class="abs" style="left:32.5px;top:31.5px;width:27px;height:23px;box-sizing:border-box;border:1.5px solid #eeb63a;background:#fdf7e8;border-radius:1px"></div>
<div class="abs" style="left:216.5px;top:31.5px;width:27px;height:23px;box-sizing:border-box;border:1px solid #d3d7dd;background:#f4f5f8;border-radius:1px"></div>
<div class="abs" style="left:245.5px;top:31.5px;width:13.5px;height:23px;box-sizing:border-box;border:1px solid #d3d7dd;background:#f4f5f8;border-radius:1px"></div>
<svg class="abs" style="left:0;top:28px" width="263" height="30" viewBox="8 244 263 30">
<defs><linearGradient id="gck" x1="0" y1="0" x2="0" y2="1"><stop offset="0" stop-color="#6be06b"/><stop offset="1" stop-color="#149c14"/></linearGradient>
<linearGradient id="gx" x1="0" y1="0" x2="0" y2="1"><stop offset="0" stop-color="#ff5a4a"/><stop offset="1" stop-color="#d40c0c"/></linearGradient></defs>
<path d="M18 259.2L23.2 264.6L32.2 254.8" fill="none" stroke="url(#gck)" stroke-width="3.6" stroke-linejoin="miter"/>
<path d="M48 253.8L60.2 264.6 M60.2 253.8L48 264.6" stroke="url(#gx)" stroke-width="4" stroke-linecap="round" fill="none"/>
<circle cx="238" cy="258.6" r="7.8" fill="#e8e8ec" stroke="#8a8e98" stroke-width="0.9"/>
<circle cx="238" cy="258.6" r="6.4" fill="#1a40b8"/>
<rect x="237.1" y="257.2" width="1.9" height="5.6" fill="#fff"/><circle cx="238" cy="254.9" r="1.1" fill="#fff"/>
<path d="M257.6 252V265.4H263.4" fill="none" stroke="#27a0cc" stroke-width="1.5"/>
<path d="M259.6 254L263.4 258.6L259.6 263.2" fill="none" stroke="#eaa356" stroke-width="2"/>
</svg>
<!-- section 1 -->
<div class="sech" style="top:59px"><span class="tri"></span><span class="st">必选</span></div>
<div class="secr" style="top:80.5px;height:31px"></div>
<div class="abs" style="left:13.5px;top:91px;font-size:12px;line-height:16px;color:#111;white-space:nowrap">曲线/点</div>
<div class="abs" style="left:93px;top:85px;width:132px;height:23px;box-sizing:border-box;border:2px solid #4ccb4c;background:#fff"></div>
<div class="abs" style="left:97px;top:90px;width:41px;height:15px;background:#0a62c8"></div>
<div class="abs" style="left:138px;top:90px;width:1px;height:15px;background:#111"></div>
<div class="abs" style="left:97.5px;top:89.5px;font-size:12px;line-height:16px;color:#fff;white-space:nowrap;letter-spacing:-0.3px">选中1个</div>
<svg class="abs" style="left:227.5px;top:87.4px" width="16" height="18" viewBox="235 303 16 18">
<path d="M240.6 305.6H245.4V310H248.6L243 316.6L237.4 310H240.6Z" fill="#8fe08f" stroke="#2aa82a" stroke-width="1"/>
<path d="M242.2 307V312.4 M243.8 307V312.4" stroke="#2aa82a" stroke-width="0.8"/>
<path d="M237 319H249" stroke="#2aa82a" stroke-width="1.2"/>
</svg>
<!-- section 2 -->
<div class="sech" style="top:114.5px"><span class="tri"></span><span class="st">约束</span></div>
<div class="secr" style="top:136px;height:43.5px"></div>
<div class="abs" style="left:78px;top:141.5px;width:106px;height:34px;box-sizing:border-box;border:1px solid #d3d7dd;background:#fbfcfd"></div>
<div class="abs" style="left:113.8px;top:141.5px;width:34.4px;height:34px;background:#ffe785"></div>
<svg class="abs" style="left:70px;top:132px" width="130" height="58" viewBox="78 348 130 58">
<circle cx="99.4" cy="378.7" r="8.5" fill="#fff" stroke="url(#fixg)" stroke-width="2.1"/>
<path d="M99.4 370.3V387.1 M91 378.7H107.8" stroke="#2590bc" stroke-width="1.5" fill="none"/>
<text x="95.9" y="368.5" font-family="Liberation Sans, sans-serif" font-weight="bold" font-size="10.3" fill="#cc1c2a">Y</text>
<text x="109.4" y="382.5" font-family="Liberation Sans, sans-serif" font-weight="bold" font-size="10.3" fill="#cc1c2a">X</text>
<text x="126.6" y="375.6" font-family="Liberation Sans, sans-serif" font-weight="bold" font-size="8.2" fill="#1b7fb5" textLength="24" lengthAdjust="spacingAndGlyphs">HORZ</text>
<rect x="126.6" y="377" width="24" height="1.6" fill="#d0202a"/>
<rect x="170.2" y="363.4" width="1.7" height="22.2" fill="#c8202c"/>
<text x="175.7" y="368.6" text-anchor="middle" font-family="Liberation Sans, sans-serif" font-weight="bold" font-size="7.6" fill="#1b86b8">V</text><text x="175.7" y="374.3" text-anchor="middle" font-family="Liberation Sans, sans-serif" font-weight="bold" font-size="7.6" fill="#1b86b8">E</text><text x="175.7" y="380" text-anchor="middle" font-family="Liberation Sans, sans-serif" font-weight="bold" font-size="7.6" fill="#1b86b8">R</text><text x="175.7" y="385.7" text-anchor="middle" font-family="Liberation Sans, sans-serif" font-weight="bold" font-size="7.6" fill="#1b86b8">T</text>
<rect x="119.7" y="353.1" width="37.2" height="45.2" fill="none" stroke="#fd7f0c" stroke-width="2.8"/>
</svg>
</div>
<svg class="abs" id="overlay" style="left:0;top:0;pointer-events:none" width="600" height="639" viewBox="0 0 600 639">
<path d="M208.6 332.7 L214.9 556" stroke="#fe7f0a" stroke-width="10" stroke-linecap="round" fill="none"/>
<path d="M200 546.3 L228.8 546.3 L215 574.5Z" fill="#fe7f0a"/>
</svg>
</body></html>
